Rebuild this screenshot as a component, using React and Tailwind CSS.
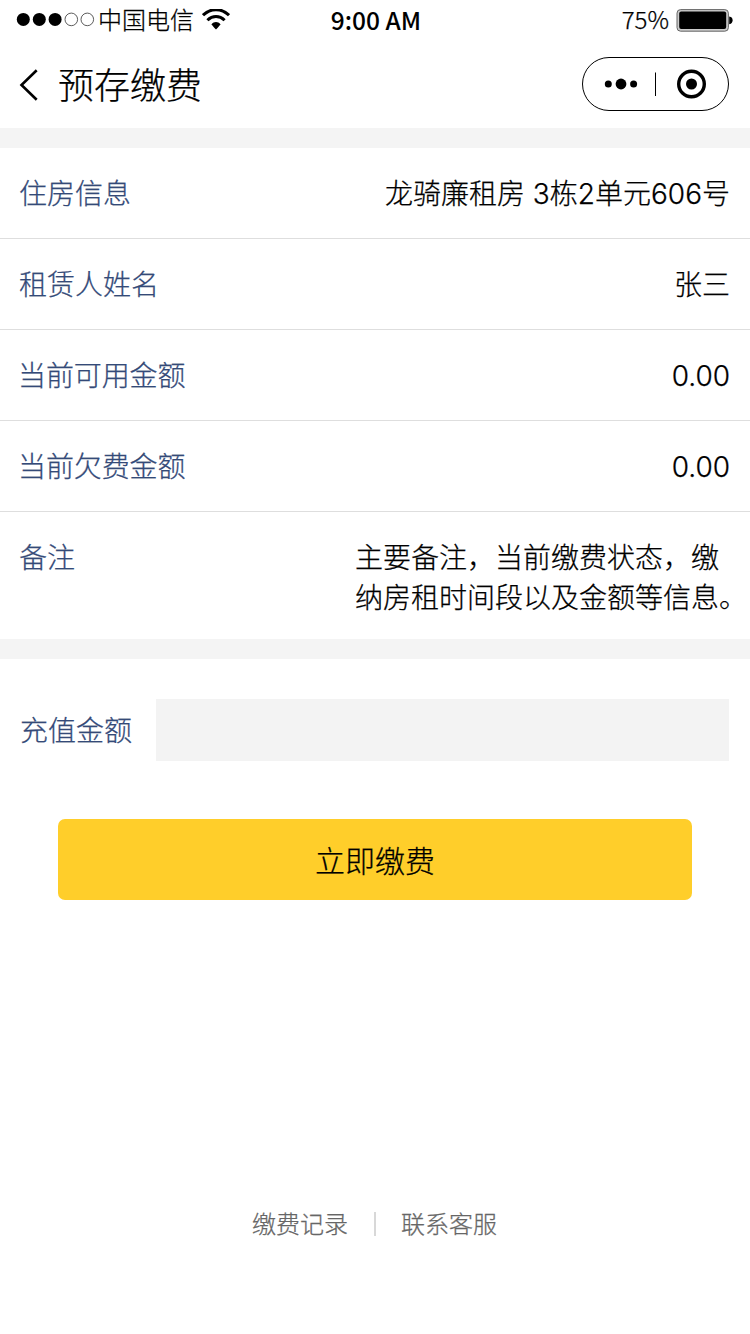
const rows = [
  { label: "住房信息", value: "龙骑廉租房 3栋2单元606号" },
  { label: "租赁人姓名", value: "张三" },
  { label: "当前可用金额", value: "0.00", tight: true },
  { label: "当前欠费金额", value: "0.00", tight: true },
];

function SignalDots() {
  return (
    <svg width="80" height="16" viewBox="0 0 80 16" className="shrink-0">
      <circle cx="7.3" cy="7.4" r="6.5" />
      <circle cx="23.3" cy="7.4" r="6.5" />
      <circle cx="39.1" cy="7.4" r="6.5" />
      <circle cx="55.3" cy="7.4" r="6.3" fill="none" stroke="#333" strokeWidth="0.8" />
      <circle cx="71.3" cy="7.4" r="6.3" fill="none" stroke="#333" strokeWidth="0.8" />
    </svg>
  );
}

function WifiIcon() {
  return (
    <svg width="28" height="22" viewBox="0 0 28 22" className="shrink-0" fill="none" stroke="#000">
      <path d="M1 6.2C8.5 -1.2 19.5 -1.2 27 6.2" strokeWidth="3" />
      <path d="M5.4 11.2C10.5 6.2 17.5 6.2 22.6 11.2" strokeWidth="3" />
      <path d="M9.4 15.4C12.2 12.2 15.8 12.2 18.6 15.4C17 16.4 16.4 18.4 14 20.4C11.6 18.4 11 16.4 9.4 15.4Z" fill="#000" stroke="none" />
    </svg>
  );
}

function BatteryIcon() {
  return (
    <svg width="58" height="23" viewBox="0 0 58 23" className="shrink-0">
      <rect x="1" y="0.6" width="51.4" height="21.6" rx="3.6" fill="#ccc" stroke="#666" strokeWidth="1" />
      <rect x="3.2" y="2.4" width="47" height="17.6" rx="2" />
      <path d="M53.2 7.5C55.8 8 56.6 9.4 56.6 11.3S55.8 14.8 53.2 15.3Z" />
    </svg>
  );
}

function StatusBar() {
  return (
    <div className="grid h-10 grid-cols-3 items-center pl-4 pr-4 text-2xl leading-none font-['Noto_Sans_CJK_SC',sans-serif]">
      <div className="flex items-center">
        <SignalDots />
        <span className="ml-0.5 whitespace-nowrap pb-0.5">中国电信</span>
        <span className="ml-2"><WifiIcon /></span>
      </div>
      <span className="pl-0.5 text-center text-[24.5px] font-medium [-webkit-text-stroke:0px]">9:00 AM</span>
      <div className="flex items-center justify-end gap-[7px]">
        <span className="pb-0.5">75%</span>
        <BatteryIcon />
      </div>
    </div>
  );
}

function NavBar() {
  return (
    <header className="flex h-[88px] items-center pl-[19px] pr-5">
      <svg width="20" height="32" viewBox="0 0 20 32" fill="none" stroke="#000" strokeWidth="2.6" className="mt-0.5">
        <path d="M17.7 1.3L2.5 16L17.7 30.7" />
      </svg>
      <h1 className="ml-[19px] pt-1 text-4xl font-light leading-none">预存缴费</h1>
      <svg width="148" height="54" viewBox="0 0 148 54" className="ml-auto">
        <rect x="0.5" y="0.5" width="146" height="53" rx="26.5" fill="none" stroke="#000" />
        <circle cx="26.3" cy="27" r="3.5" />
        <circle cx="39" cy="27" r="5.4" />
        <circle cx="51.6" cy="27" r="3.5" />
        <path d="M73.5 15.5V39" stroke="#000" />
        <circle cx="109.5" cy="27" r="12.8" fill="none" stroke="#000" strokeWidth="3.4" />
        <circle cx="109.5" cy="27" r="5.5" />
      </svg>
    </header>
  );
}

export default function App() {
  return (
    <div className="flex h-[1334px] w-[750px] flex-col bg-white font-light text-black [-webkit-text-stroke:0.25px] font-[Inter,'Noto_Sans_CJK_SC',sans-serif]">
      <StatusBar />
      <NavBar />

      <section className="border-y-20 border-[#f4f4f4] text-[28px]">
        {rows.map((row) => (
          <div
            key={row.label}
            className="flex h-[91px] items-center justify-between border-b border-[#dedede] pl-[19px] pr-5 pt-0.5"
          >
            <span className={row.tight ? "-ml-px tracking-[-0.1px] text-[#344a78]" : "text-[#344a78]"}>
              {row.label}
            </span>
            <span>{row.value}</span>
          </div>
        ))}
        <div className="flex h-[127px] justify-between pl-[19px] pt-[26px] leading-10">
          <span className="text-[#344a78]">备注</span>
          <p className="w-[395px]">
            主要备注，当前缴费状态，缴
            <br />
            纳房租时间段以及金额等信息。
          </p>
        </div>
      </section>

      <div className="mt-10 flex h-[62px] items-center pl-5 pr-[21px]">
        <label htmlFor="amount" className="w-[136px] pt-0.5 text-[28px] text-[#344a78]">
          充值金额
        </label>
        <input id="amount" className="h-full min-w-0 flex-1 bg-[#f3f3f3] px-4 text-[28px] outline-none" />
      </div>

      <button className="mx-[58px] mt-[58px] h-[81px] rounded-[7px] bg-[#ffce2a] pt-0.5 text-3xl font-light">
        立即缴费
      </button>

      <footer className="mb-[92px] mt-auto flex h-9 items-center justify-center pr-px text-2xl text-[#666]">
        <a className="pt-0.5">缴费记录</a>
        <span className="ml-[26px] mr-[25px] h-6 w-0.5 bg-[#d8d8d8]" />
        <a className="pt-0.5">联系客服</a>
      </footer>
    </div>
  );
}
